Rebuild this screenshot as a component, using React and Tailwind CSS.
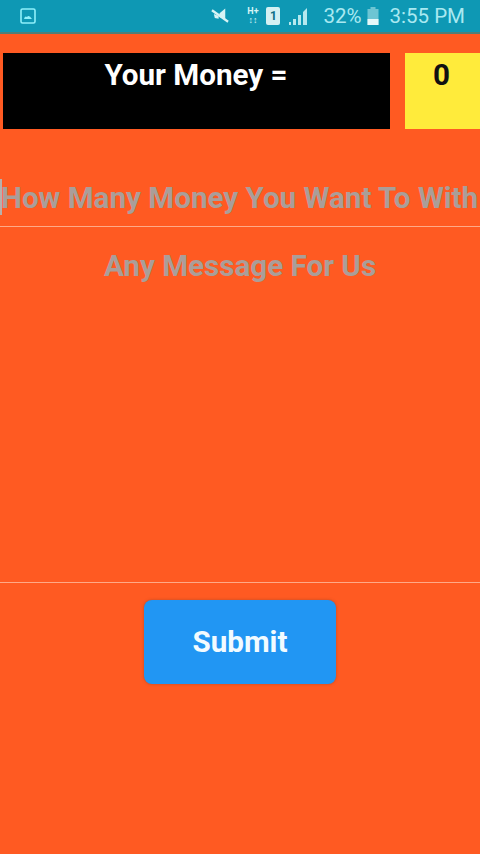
export default function App() {
  return (
    <div className="w-[480px] h-[854px] overflow-hidden flex flex-col bg-[#ff5a22] font-['Roboto',sans-serif]">
      <div className="h-[34px] shrink-0 bg-[#0e98b4] flex items-center pl-[20px] pr-[15px] text-[#b5eef5] border-b-2 border-[#4f7f78]">
        <svg width="16" height="16" viewBox="0 0 16 16" className="text-[#8ff0fa]">
          <rect x="1" y="1" width="14" height="14" rx="1.5" fill="none" stroke="currentColor" strokeWidth="1.6" />
          <path d="M4 11 Q5 7.5 7 9 Q9 6.5 12 11 Z" fill="currentColor" />
        </svg>
        <div className="flex-1" />
        <svg width="19" height="18" viewBox="0 0 20 18" className="mr-[16px] text-[#d8f4f5]">
          <path d="M9 6 L15 1 L15 13 L9 10 Z" fill="currentColor" />
          <path d="M1 3 L18 15" stroke="currentColor" strokeWidth="2.4" />
          <path d="M3 7 L8 9 L8 12 L4 11 Z" fill="currentColor" />
        </svg>
        <div className="mr-[7px] w-[13px] flex flex-col items-center text-[#d8f4f5] font-bold text-[9px] leading-[9px]">
          <span>H+</span>
          <span>↕↕</span>
        </div>
        <div className="mr-[9px] w-[14px] h-[18px] bg-[#d4f0f2] rounded-[2px] flex items-center justify-center text-[#0e6f85] text-[12px] font-bold leading-none">1</div>
        <svg width="19" height="17" viewBox="0 0 19 17" className="mr-[15px] text-[#b5e8ee]">
          <rect x="0" y="14" width="2" height="3" fill="currentColor" />
          <rect x="4" y="11" width="3" height="6" fill="currentColor" />
          <rect x="9" y="7" width="3" height="10" fill="currentColor" />
          <path d="M14 4 L18 0 L18 17 L14 17 Z" fill="currentColor" />
        </svg>
        <span className="text-[20.5px] leading-none text-[#a9e9f1]">32%</span>
        <svg width="12" height="18" viewBox="0 0 11 18" className="ml-[5px] mr-[11px]">
          <rect x="3" y="0" width="5" height="2" fill="#6dc5d3" />
          <rect x="0" y="2" width="11" height="16" fill="#6dc5d3" />
          <rect x="0" y="12" width="11" height="6" fill="#e6f8f8" />
        </svg>
        <span className="text-[20.5px] leading-none text-[#a9e9f1]">3:55 PM</span>
      </div>

      <div className="flex items-start mt-[19px] pl-[3px] h-[76px] shrink-0">
        <div className="w-[387px] h-full bg-black text-white text-[29.6px] font-bold leading-[44px] text-center pr-[1px]">Your Money =</div>
        <div className="ml-[15px] w-[75px] h-full bg-[#ffeb3b] text-[#111] text-[29.6px] font-bold leading-[44px] text-center pr-[2px]">0</div>
      </div>

      <div className="mt-[47px] h-[51px] shrink-0 border-b border-[#ffa988] flex items-start overflow-hidden whitespace-nowrap text-[#aa9e99] text-[29.6px] font-bold leading-[44px]">
        <span className="w-[2px] h-[36px] mt-[3px] bg-[#b8b0ab] shrink-0 -mr-[1px]" />
        <span>How Many Money You Want To With</span>
      </div>

      <div className="h-[356px] shrink-0 border-b border-[#ffa988] pt-[17px] text-center text-[#aa9e99] text-[29.6px] font-bold leading-[44px]">Any Message For Us</div>

      <div className="flex justify-center mt-[17px]">
        <button className="w-[192px] h-[84px] rounded-[8px] bg-[#2196f3] text-[#f2fbff] text-[29.6px] font-bold shadow-[0_0_3px_rgba(120,60,40,0.5)]">Submit</button>
      </div>
    </div>
  );
}
